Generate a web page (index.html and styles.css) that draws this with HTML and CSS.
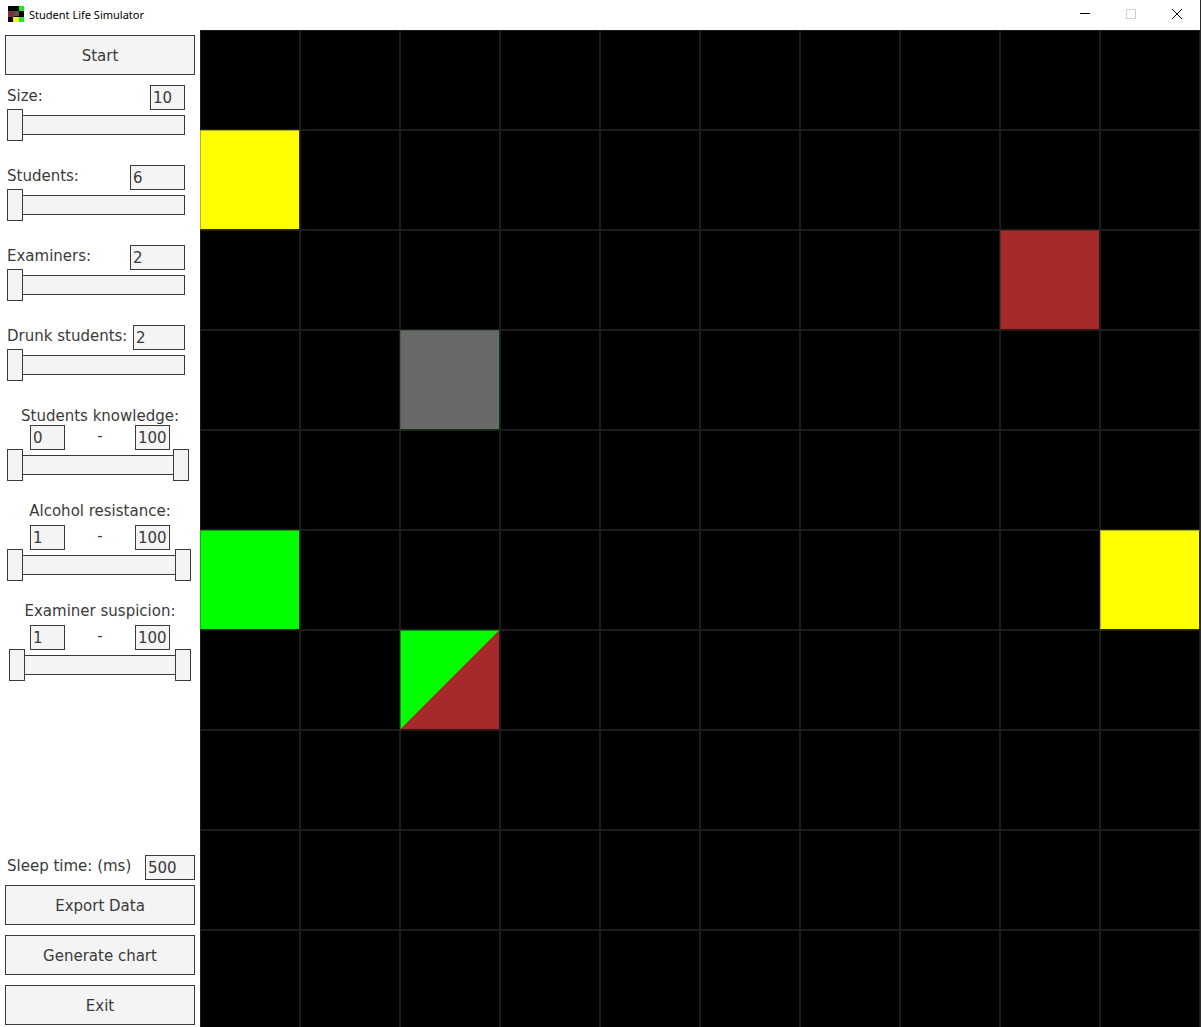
FILE: index.html
```html
<!DOCTYPE html>
<html lang="en">
<head>
<meta charset="utf-8">
<title>Student Life Simulator</title>
<link rel="stylesheet" href="styles.css">
</head>
<body>
<div class="window">
  <header class="titlebar">
    <svg class="app-icon" viewBox="0 0 16 16" aria-hidden="true">
      <path fill="#0a0505" d="M0 0h16v16H0z"/>
      <path fill="#22e822" d="M11 0h5v5h-5zM11 11h5v5h-5z"/>
      <path fill="#7c2e32" d="M0 5h6v6H0z"/>
      <path fill="#5c5050" d="M6 5h5v5H6z"/>
      <path fill="#f4f41c" d="M5 11h6v5H5z"/>
    </svg>
    <h1 class="title">Student Life Simulator</h1>
    <div class="window-buttons">
      <button class="window-button" type="button" aria-label="Minimize"><svg viewBox="0 0 10 10"><path d="M0 4.5h10"/></svg></button>
      <button class="window-button" type="button" aria-label="Maximize" disabled><svg viewBox="0 0 10 10"><path d="M.5.5h9v9h-9z"/></svg></button>
      <button class="window-button" type="button" aria-label="Close"><svg viewBox="0 0 10 10"><path d="M0 0l10 10M10 0L0 10"/></svg></button>
    </div>
  </header>
  <main class="content">
    <form class="sidebar">
      <button class="button" type="button">Start</button>
      <div class="settings">
        <div class="setting">
          <div class="setting-row"><label for="size">Size:</label><input class="box" id="size" type="text" value="10"></div>
          <input class="slider" type="range" min="10" max="100" value="10" aria-label="Size">
        </div>
        <div class="setting">
          <div class="setting-row"><label for="students">Students:</label><input class="box box-wide" id="students" type="text" value="6"></div>
          <input class="slider" type="range" min="6" max="100" value="6" aria-label="Students">
        </div>
        <div class="setting">
          <div class="setting-row"><label for="examiners">Examiners:</label><input class="box box-wide" id="examiners" type="text" value="2"></div>
          <input class="slider" type="range" min="2" max="100" value="2" aria-label="Examiners">
        </div>
        <div class="setting">
          <div class="setting-row"><label for="drunk">Drunk students:</label><input class="box box-drunk" id="drunk" type="text" value="2"></div>
          <input class="slider" type="range" min="2" max="100" value="2" aria-label="Drunk students">
        </div>
      </div>
      <fieldset class="range range-tight">
        <legend class="range-title">Students knowledge:</legend>
        <div class="range-row"><input class="box" type="text" value="0" aria-label="Lowest knowledge"><span class="dash">-</span><input class="box" type="text" value="100" aria-label="Highest knowledge"></div>
        <div class="double-slider">
          <input class="slider" type="range" min="0" max="101" value="0" aria-label="Lowest knowledge">
          <input class="slider slider-upper" type="range" min="0" max="101" value="100" aria-label="Highest knowledge">
        </div>
      </fieldset>
      <fieldset class="range">
        <legend class="range-title">Alcohol resistance:</legend>
        <div class="range-row"><input class="box" type="text" value="1" aria-label="Lowest resistance"><span class="dash">-</span><input class="box" type="text" value="100" aria-label="Highest resistance"></div>
        <div class="double-slider">
          <input class="slider" type="range" min="1" max="100" value="1" aria-label="Lowest resistance">
          <input class="slider slider-upper" type="range" min="1" max="100" value="100" aria-label="Highest resistance">
        </div>
      </fieldset>
      <fieldset class="range">
        <legend class="range-title">Examiner suspicion:</legend>
        <div class="range-row"><input class="box" type="text" value="1" aria-label="Lowest suspicion"><span class="dash">-</span><input class="box" type="text" value="100" aria-label="Highest suspicion"></div>
        <div class="double-slider">
          <input class="slider" type="range" min="0" max="100" value="1" aria-label="Lowest suspicion">
          <input class="slider slider-upper" type="range" min="0" max="100" value="100" aria-label="Highest suspicion">
        </div>
      </fieldset>
      <div class="actions">
        <div class="sleep-row"><label for="sleep">Sleep time: (ms)</label><input class="box box-sleep" id="sleep" type="text" value="500"></div>
        <div class="action-list">
          <button class="button" type="button">Export Data</button>
          <button class="button" type="button">Generate chart</button>
          <button class="button" type="button">Exit</button>
        </div>
      </div>
    </form>
    <section class="board-area" aria-label="Simulation board">
      <div class="board">
        <div class="cell yellow" style="grid-area: 2 / 1"></div>
        <div class="cell brown" style="grid-area: 3 / 9"></div>
        <div class="cell gray" style="grid-area: 4 / 3"></div>
        <div class="cell green" style="grid-area: 6 / 1"></div>
        <div class="cell yellow" style="grid-area: 6 / 10"></div>
        <div class="cell split" style="grid-area: 7 / 3"></div>
      </div>
    </section>
  </main>
</div>
</body>
</html>
```

FILE: styles.css
```css
* {
  box-sizing: border-box;
}

body {
  margin: 0;
  background: #fff;
  color: #3a3a3a;
  font: 15px/22px "DejaVu Sans", sans-serif;
}

.window {
  display: flex;
  flex-direction: column;
  height: 100vh;
  overflow: hidden;
  border-right: 1px solid #2a2a2a;
}

/* Title bar */
.titlebar {
  display: flex;
  align-items: flex-start;
  flex: none;
  height: 30px;
  padding-left: 8px;
}

.app-icon {
  width: 16px;
  height: 16px;
  margin: 6px 5px 0 0;
}

.title {
  margin: 7px 0 0;
  color: #000;
  font: 11px/16px "Noto Sans", sans-serif;
}

.window-buttons {
  display: flex;
  margin-left: auto;
}

.window-button {
  display: flex;
  align-items: center;
  justify-content: center;
  width: 46px;
  height: 28px;
  padding: 0;
  border: 0;
  background: none;
}

.window-button svg {
  width: 10px;
  height: 10px;
  fill: none;
  stroke: #000;
}

.window-button:disabled svg {
  stroke: #ccc;
}

/* Sidebar */
.content {
  display: flex;
  flex: 1;
  min-height: 0;
}

.sidebar {
  display: flex;
  flex-direction: column;
  flex: none;
  width: 200px;
  padding: 5px 5px 2px;
}

.button {
  display: block;
  width: 100%;
  height: 40px;
  padding: 2px 0 0;
  border: 1px solid #3a3a3a;
  background: #f4f4f4;
  color: inherit;
  font: inherit;
}

.box {
  width: 35px;
  height: 25px;
  padding: 0 2px;
  border: 1px solid #3a3a3a;
  border-radius: 0;
  background: #f4f4f4;
  color: inherit;
  font: inherit;
}

.box-sleep {
  width: 50px;
}

.box-drunk {
  width: 52px;
}

.box-wide {
  width: 55px;
}

.settings {
  padding: 10px 10px 0 2px;
}

.setting {
  height: 80px;
}

.setting-row,
.sleep-row {
  display: flex;
  justify-content: space-between;
  height: 24px;
  white-space: nowrap;
}

.slider {
  display: block;
  width: 100%;
  height: 32px;
  margin: 0;
  appearance: none;
  background: none;
}

.slider::-webkit-slider-runnable-track {
  height: 20px;
  border: 1px solid #3a3a3a;
  background: #f4f4f4;
}

.slider::-webkit-slider-thumb {
  width: 16px;
  height: 32px;
  margin: -7px -1px 0;
  border: 1px solid #3a3a3a;
  appearance: none;
  background: #f4f4f4;
  pointer-events: auto;
}

.range {
  min-width: 0;
  height: 100px;
  margin: 0;
  padding: 0;
  border: 0;
}

.range-tight {
  height: 95px;
}

.range-title {
  width: 100%;
  height: 25px;
  padding: 0;
  text-align: center;
}

.range-tight .range-title {
  height: 20px;
}

.range-row {
  display: flex;
  justify-content: space-between;
  height: 24px;
  padding: 0 25px;
}

.double-slider {
  position: relative;
  height: 32px;
  margin: 0 4px 0 2px;
}

/* One track behind both handles, ending under them. */
.double-slider::before {
  content: "";
  position: absolute;
  inset: 6px 8px;
  border: 1px solid #3a3a3a;
  background: #f4f4f4;
}

.double-slider .slider {
  position: absolute;
  inset: 0;
}

.double-slider .slider::-webkit-slider-runnable-track {
  border: 0;
  background: none;
}

.double-slider .slider::-webkit-slider-thumb {
  margin: -6px 0 0;
}

.double-slider .slider-upper {
  pointer-events: none;
}

.actions {
  margin-top: auto;
}

.sleep-row {
  height: 30px;
  padding-left: 2px;
}

.action-list {
  display: grid;
  gap: 10px;
}

/* Board */
.board-area {
  flex: 1;
  min-width: 0;
  overflow: hidden;
  background: #000;
}

.board {
  display: grid;
  grid-template: repeat(10, 1fr) / repeat(10, 1fr);
  aspect-ratio: 1;
  background-color: #000;
  background-image:
    linear-gradient(90deg, #1c1c1c 1px, transparent 1px calc(100% - 1px), #1c1c1c calc(100% - 1px)),
    linear-gradient(#1c1c1c 1px, transparent 1px calc(100% - 1px), #1c1c1c calc(100% - 1px));
  background-size: 10% 10%;
}

.cell {
  border: 1px solid;
}

.yellow {
  border-color: #b4b414 #2c2c04 #2c2c04 #b4b414;
  background: #ff0;
}

.brown {
  border-color: #6c2424 #301414 #301414 #6c2424;
  background: #a52a2a;
}

.gray {
  border-color: #486048 #0c380c #0c380c #486048;
  background: #696969;
}

.green {
  border-color: #10a010 #083008 #083008 #10b410;
  background: #0f0;
}

.split {
  border-color: #109010 #301414 #301414 #109010;
  background: linear-gradient(to bottom right, #0f0 50%, #a52a2a 50%);
}
```
